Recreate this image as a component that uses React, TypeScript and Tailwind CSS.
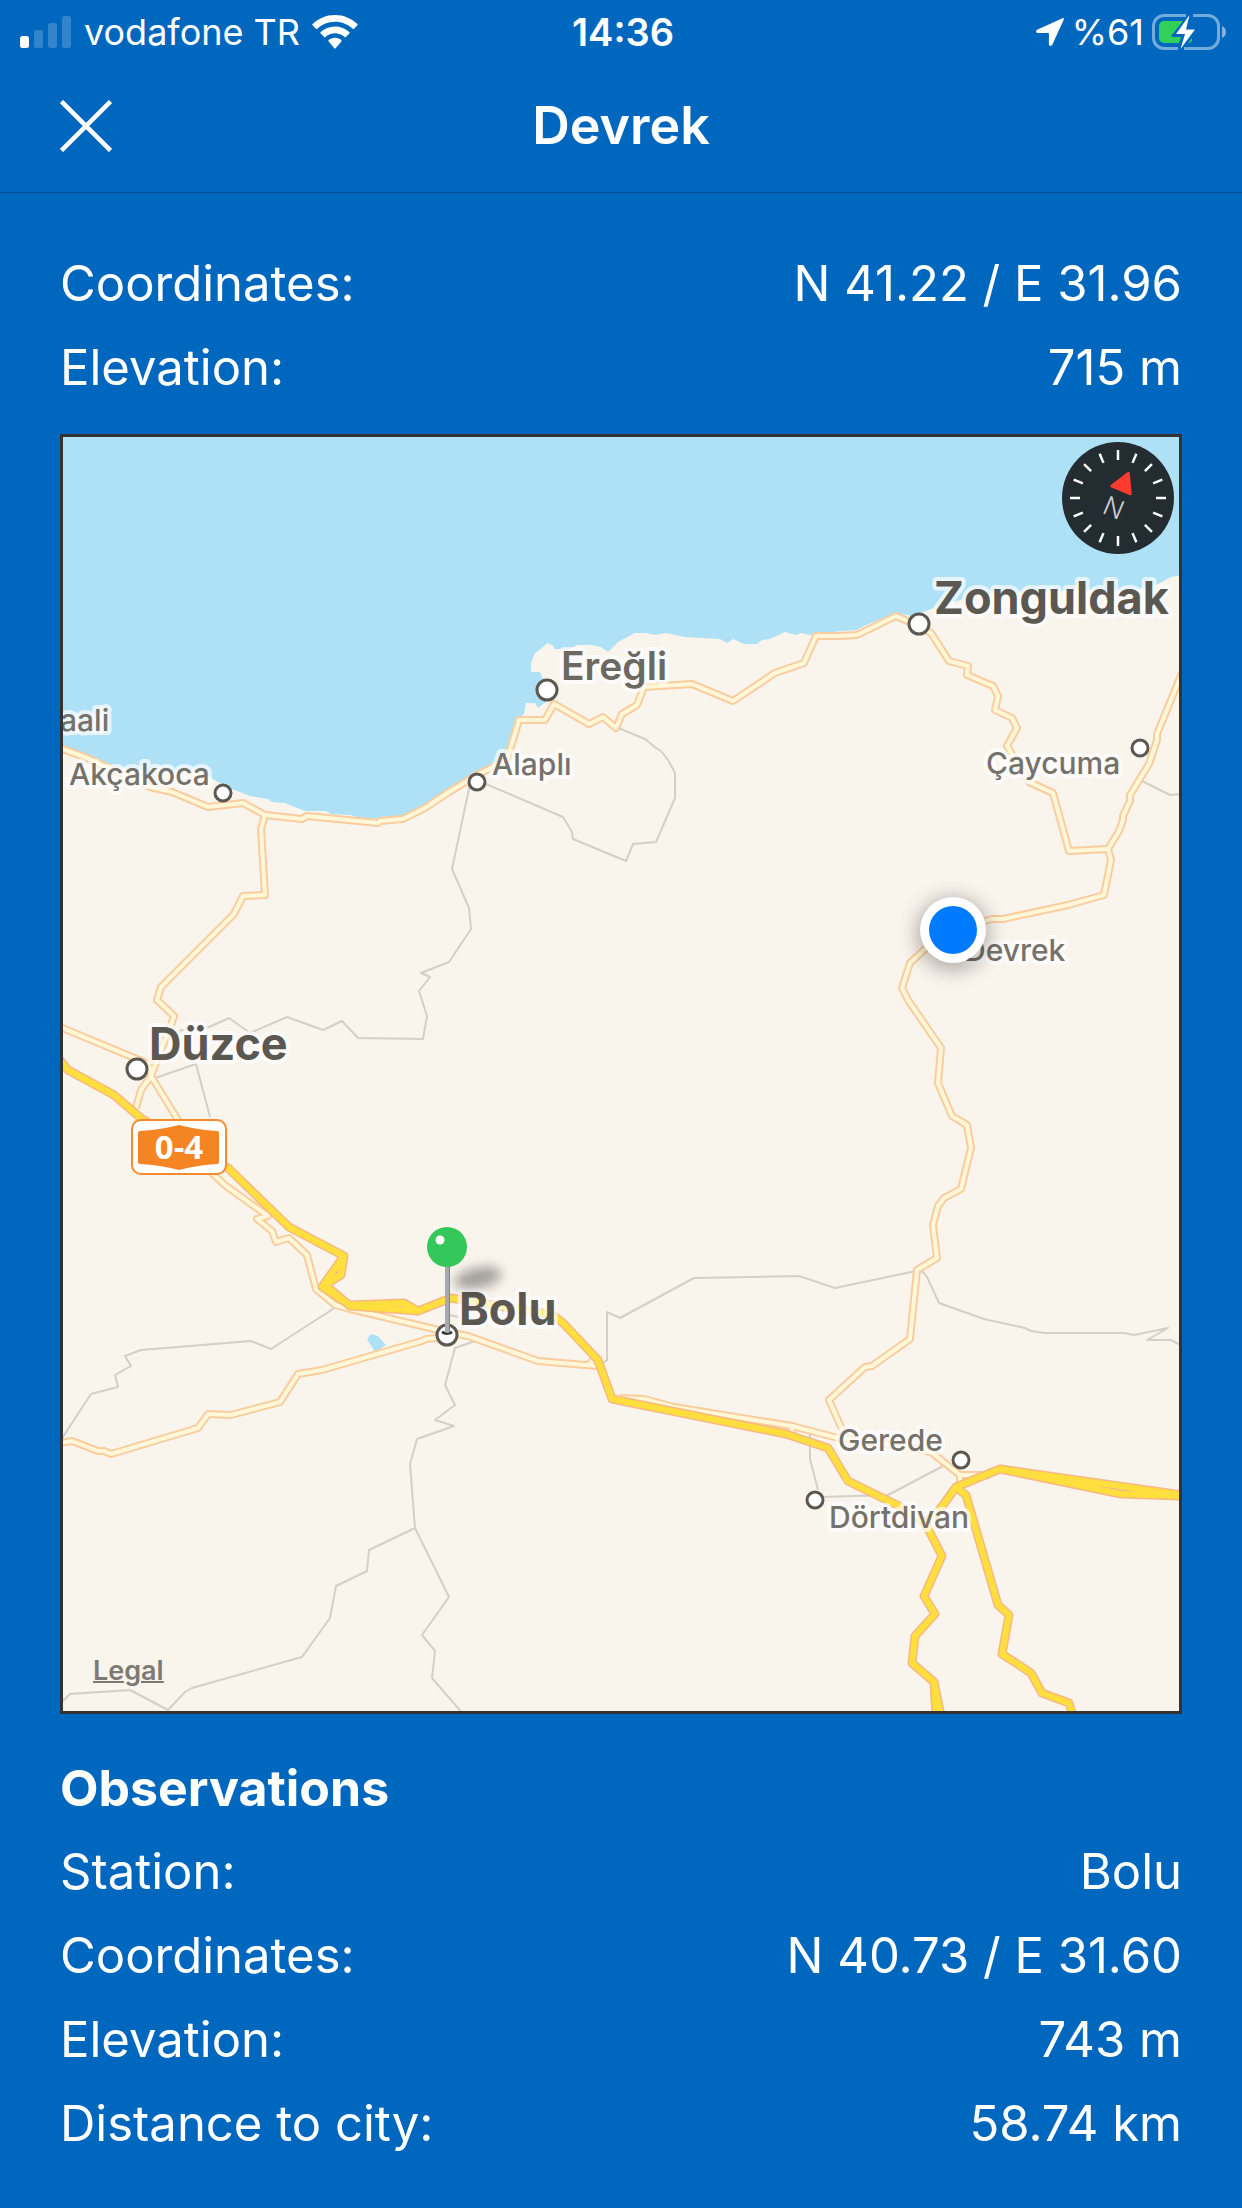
const FONT = "font-['Inter','Liberation_Sans',sans-serif]";

interface Place {
  name: string;
  x: number;
  y: number;
  size: "sm" | "md" | "lg";
}

interface InfoRowProps {
  label: string;
  value: string;
}

// Province and district borders
const BORDERS = [
  "470,784 452,869 469,908 471,929 449,962 421,973 430,977 419,991 427,1016 423,1039 358,1038 342,1021 323,1030 287,1017 250,1033 229,1018 209,1027 176,1031",
  "155,1078 196,1064 210,1117",
  "486,784 563,817 572,832 573,839 626,861 633,844 656,842 675,798 675,773 668,760 661,751 656,748 645,739 616,727",
  "1140,780 1170,795 1182,794",
  "336,1307 271,1349 251,1341 141,1350 125,1356 131,1366 115,1375 118,1387 91,1394 61,1440",
  "475,1341 455,1348 445,1385 455,1405 435,1420 454,1426 417,1439 410,1464 415,1528 449,1597 422,1635 435,1651 432,1678 464,1715",
  "415,1528 369,1550 367,1571 336,1586 330,1618 302,1657 192,1688 185,1692 168,1710 130,1690 70,1694 61,1703",
  "601,1365 607,1360 607,1312 620,1318 694,1278 799,1276 835,1288 916,1271 923,1272 927,1277 939,1303 984,1319 1025,1328 1031,1331 1044,1333 1125,1333 1134,1335 1168,1328 1147,1340 1171,1340 1182,1346",
  "810,1434 810,1459 818,1490",
  "823,1497 888,1495 947,1464",
  "449,1315 459,1317",
];

const ROADS = [
  "60,748 87,758 113,770 150,787 172,792 208,807 243,803 265,815 302,819 307,816 378,823 380,821 403,819 425,808 449,792 477,775 507,760 519,720 545,720 554,704 589,724 603,717 616,728 622,714 637,705 644,687 692,684 733,701 775,673 804,663 816,636 838,636 857,635 896,616 912,623 931,633 949,661 968,666 967,675 993,686 998,696 995,710 1012,718 1017,728 1007,746 1029,782 1053,793 1069,851 1108,849",
  "1182,673 1157,734 1157,740 1149,764 1130,795 1130,801 1123,816 1123,820 1119,831 1108,849 1111,860 1104,895 1068,905 1003,919 992,919 953,930 925,949 910,963 902,988 908,1000 941,1048 938,1083 952,1116 967,1125 971,1148 961,1189 944,1198 938,1206 933,1225 937,1258 917,1270 910,1339 872,1366 865,1367 829,1400 841,1427 846,1438",
  "265,815 261,829 265,895 243,896 234,914 161,987 157,1000 174,1016 170,1028 161,1050 151,1076 178,1120 213,1174 226,1186 268,1216 257,1219 272,1231 276,1242 289,1238 307,1255 316,1289 335,1305 350,1309 447,1332 468,1336 538,1361 597,1366",
  "60,1027 149,1064 151,1076 141,1090 136,1108",
  "588,1365 596,1358",
  "60,1443 72,1441 98,1451 104,1451 111,1454 198,1428 208,1414 231,1415 280,1402 298,1374 322,1370 422,1341 426,1339 447,1337",
  "620,1398 644,1399 674,1407 792,1426 838,1438 886,1444 931,1452 960,1475 990,1475",
  "960,1475 960,1487",
  "792,1426 792,1434",
];

const MOTORWAYS = [
  "60,1060 68,1070 114,1095 142,1119 228,1168 289,1227 344,1256 341,1275 322,1287 350,1305 404,1303 418,1311 451,1298 553,1315 564,1324 598,1360 612,1399 786,1434 828,1448 848,1481 901,1507 925,1523 942,1556 924,1596 935,1614 915,1636 912,1663 934,1682 936,1716",
  "344,1256 324,1284 350,1306 418,1311",
  "934,1682 941,1716",
  "925,1523 938,1512 956,1487 1000,1469 1182,1495",
  "1000,1469 1121,1494 1182,1496",
  "958,1489 966,1495 977,1533 998,1605 1009,1615 1002,1654 1031,1673 1042,1693 1069,1703 1073,1716",
];

const SEA =
  "60,434 1182,434 1182,575 1171,577 1156,585 1130,591 1082,590 1042,592 980,594 934,608 912,616 895,613 864,626 857,630 842,631 816,634 810,635 801,633 796,635 785,632 770,639 762,640 757,644 744,644 733,639 727,643 720,639 685,637 666,633 655,635 646,633 635,633 618,642 608,652 601,647 592,645 577,645 570,649 555,649 552,645 547,643 542,648 535,653 531,663 531,672 540,672 543,679 547,701 538,708 535,703 526,703 524,714 517,720 509,753 490,766 477,772 435,797 427,803 424,808 405,816 379,819 357,817 350,815 331,814 326,811 305,811 285,803 272,802 268,799 250,796 240,792 228,788 213,779 198,771 161,773 120,768 105,762 60,744";

const PLACES: Place[] = [
  { name: "aali", x: 60, y: 731, size: "sm" },
  { name: "Akçakoca", x: 69, y: 785, size: "sm" },
  { name: "Alaplı", x: 492, y: 775, size: "sm" },
  { name: "Ereğli", x: 561, y: 680, size: "md" },
  { name: "Zonguldak", x: 934, y: 614, size: "lg" },
  { name: "Çaycuma", x: 986, y: 774, size: "sm" },
  { name: "Devrek", x: 964, y: 961, size: "sm" },
  { name: "Düzce", x: 149, y: 1060, size: "lg" },
  { name: "Bolu", x: 459, y: 1325, size: "lg" },
  { name: "Gerede", x: 838, y: 1451, size: "sm" },
  { name: "Dörtdivan", x: 829, y: 1528, size: "sm" },
];

const TOWN_DOTS = [
  { x: 547, y: 690, r: 10 },
  { x: 919, y: 624, r: 10 },
  { x: 137, y: 1069, r: 10 },
  { x: 447, y: 1335, r: 10 },
  { x: 223, y: 793, r: 8 },
  { x: 477, y: 782, r: 8 },
  { x: 1140, y: 748, r: 8 },
  { x: 961, y: 1460, r: 8 },
  { x: 815, y: 1500, r: 8 },
];

const LABEL_STYLES = {
  sm: "fill-[#75726b] text-[30px] font-medium",
  md: "fill-[#6c6962] text-[39px] font-semibold",
  lg: "fill-[#5b5851] text-[45px] font-bold",
};

function Lines({ points, stroke, width }: { points: string[]; stroke: string; width: number }) {
  return (
    <g fill="none" stroke={stroke} strokeWidth={width} strokeLinejoin="round">
      {points.map((p) => (
        <polyline key={p} points={p} />
      ))}
    </g>
  );
}

function StatusBar() {
  return (
    <div className="grid h-16 grid-cols-[1fr_auto_1fr] items-center pr-4 pl-5 text-[36px] leading-[60px]">
      <div className="flex items-center gap-3">
        <svg width="52" height="32" viewBox="0 0 52 32" fill="#fff" aria-label="Signal">
          <rect x="0" y="20" width="9" height="12" rx="2.5" />
          <rect x="14" y="14" width="9" height="18" rx="2.5" opacity=".2" />
          <rect x="28" y="7" width="9" height="25" rx="2.5" opacity=".2" />
          <rect x="42" y="0" width="9" height="32" rx="2.5" opacity=".2" />
        </svg>
        <span>vodafone TR</span>
        <svg width="46" height="34" viewBox="0 0 46 34" fill="#fff" aria-label="Wi-Fi">
          <path d="M23 0C14.300 0 6.500 3.400.600 8.900a1 1 0 0 0 0 1.400l3.300 3.400a1 1 0 0 0 1.400 0A25.600 25.600 0 0 1 23 6.700c6.900 0 13.100 2.700 17.700 7a1 1 0 0 0 1.400 0l3.300-3.400a1 1 0 0 0 0-1.400C39.500 3.400 31.700 0 23 0z" />
          <path d="M23 11.400c-5.500 0-10.500 2.100-14.300 5.600a1 1 0 0 0 0 1.500l3.400 3.400a1 1 0 0 0 1.400 0 14 14 0 0 1 19 0 1 1 0 0 0 1.400 0l3.400-3.400a1 1 0 0 0 0-1.500A21 21 0 0 0 23 11.400z" />
          <path d="M23 22.800c-2.400 0-4.600.900-6.300 2.300a1 1 0 0 0 0 1.500l5.600 6.600a1 1 0 0 0 1.400 0l5.600-6.600a1 1 0 0 0 0-1.500c-1.700-1.400-3.900-2.300-6.300-2.300z" />
        </svg>
      </div>
      <span className="text-[38px] font-semibold">14:36</span>
      <div className="flex items-center justify-end gap-2">
        <svg width="28" height="28" viewBox="0 0 28 28" fill="#fff" aria-label="Location">
          <path d="M26.500.200 1.100 11.700C-.600 12.500-.100 15 1.700 15h10.600c.4 0 .6.200.6.600v10.600c0 1.900 2.600 2.300 3.400.600L27.800 1.600c.4-.9-.4-1.800-1.300-1.400z" />
        </svg>
        <span>%61</span>
        <svg width="74" height="36" viewBox="0 0 74 36" aria-label="Battery">
          <path
            d="M34 1.500H12A10.500 10.500 0 0 0 1.500 12v12A10.500 10.500 0 0 0 12 34.500h14M41 1.500h15A10.500 10.500 0 0 1 66.500 12v12A10.500 10.500 0 0 1 56 34.500H32"
            fill="none"
            stroke="#fff"
            strokeOpacity=".45"
            strokeWidth="3"
          />
          <path d="M70 12c2.500 1 4 3.300 4 6s-1.500 5-4 6z" fill="#fff" opacity=".5" />
          <path d="M31 7H12a5 5 0 0 0-5 5v12a5 5 0 0 0 5 5h15l2-6h-9l-1-1z" fill="#30d158" />
          <path d="m36 29 4-5v3q-1 2-4 2z" fill="#30d158" />
          <path d="M37.500 1 24 20h9L28.500 35 43 15.500h-9z" fill="#fff" />
        </svg>
      </div>
    </div>
  );
}

function InfoRow({ label, value }: InfoRowProps) {
  return (
    <div className="flex justify-between">
      <dt>{label}</dt>
      <dd>{value}</dd>
    </div>
  );
}

function Compass() {
  return (
    <svg viewBox="-56 -56 112 112" className="size-full">
      <circle r="56" fill="#232c31" />
      <g stroke="#fff" strokeWidth="2.500">
        {Array.from({ length: 16 }, (_, i) => (
          <line key={i} y1="-48" y2="-38" transform={`rotate(${i * 22.5})`} />
        ))}
      </g>
      <path
        d="M10.500-25-6.500-12 12.500-4z"
        fill="#ff3b30"
        stroke="#ff3b30"
        strokeWidth="2.500"
        strokeLinejoin="round"
      />
      <text
        y="20"
        textAnchor="middle"
        transform="rotate(23)"
        className="fill-[#c9cccd] text-[26px] font-light"
      >
        N
      </text>
    </svg>
  );
}

function StationMap() {
  return (
    <section aria-label="Map" className="relative overflow-hidden border-3 border-[#333]">
      <svg viewBox="63 437 1116 1274" className="block h-auto w-full bg-[#f9f4ec]">
        <defs>
          <filter id="soft" x="-50%" y="-150%" width="200%" height="400%">
            <feGaussianBlur stdDeviation="6" />
          </filter>
          <filter id="glow" x="-50%" y="-50%" width="200%" height="200%">
            <feGaussianBlur stdDeviation="10" />
          </filter>
        </defs>

        <polygon points={SEA} fill="#afe1f6" />
        <polygon points="367,1339 371,1334 378,1336 386,1345 375,1352" fill="#afe1f6" />

        <Lines points={BORDERS} stroke="#d2d0c8" width={2} />
        <Lines points={ROADS} stroke="#f9cd9f" width={8} />
        <Lines points={ROADS} stroke="#fff8d8" width={4} />
        <Lines points={MOTORWAYS} stroke="#f8b883" width={9} />
        <Lines points={MOTORWAYS} stroke="#ffdf3d" width={6} />

        {/* O-4 motorway shield */}
        <rect x="132" y="1120" width="94" height="54" rx="9" fill="#fff" stroke="#f58a2f" strokeWidth="2" />
        <path d="M140 1131q20-1 39-6 19 5 38 6 2 0 2 2v29q0 2-2 2-19 1-38 6-19-5-39-6-2 0-2-2v-29q0-2 2-2z" fill="#f58423" />
        <text
          x="179"
          y="1159"
          textAnchor="middle"
          className="fill-white font-['Open_Sans','Noto_Sans',sans-serif] text-[33px] font-bold"
        >
          0-4
        </text>

        {TOWN_DOTS.map(({ x, y, r }) => (
          <circle key={`${x}-${y}`} cx={x} cy={y} r={r} fill="#fff" stroke="#5b5851" strokeWidth="3" />
        ))}

        {PLACES.map(({ name, x, y, size }) => (
          <text
            key={name}
            x={x}
            y={y}
            stroke="#fff"
            strokeOpacity=".7"
            strokeWidth="8"
            strokeLinejoin="round"
            paintOrder="stroke"
            className={LABEL_STYLES[size]}
          >
            {name}
          </text>
        ))}

        {/* Station pin */}
        <ellipse
          cx="478"
          cy="1278"
          rx="24"
          ry="10"
          fill="#000"
          opacity=".35"
          filter="url(#soft)"
          transform="rotate(-12 478 1278)"
        />
        <path d="M442 1332q5 3 10 0" fill="none" stroke="#333" strokeWidth="3" />
        <rect x="445" y="1264" width="5" height="69" rx="2" fill="#a8abae" />
        <rect x="449" y="1264" width="1" height="67" fill="#7f8386" />
        <circle cx="447" cy="1247" r="20" fill="#34c759" />
        <circle cx="440" cy="1240" r="4.500" fill="#fff" />

        {/* City location */}
        <circle cx="953" cy="934" r="36" fill="#000" opacity=".3" filter="url(#glow)" />
        <circle cx="953" cy="930" r="33" fill="#fff" />
        <circle cx="953" cy="930" r="24" fill="#007aff" />
      </svg>

      <button type="button" aria-label="Compass" className="absolute top-[5px] right-[5px] size-28">
        <Compass />
      </button>
      <a
        href="#legal"
        className="absolute bottom-6 left-[30px] text-[27px] leading-8 font-semibold text-[#7d7a75] underline decoration-2"
      >
        Legal
      </a>
    </section>
  );
}

export default function App() {
  return (
    <div className={`min-h-screen bg-[#0067bf] text-white ${FONT}`}>
      <StatusBar />
      <header className="grid h-[129px] grid-cols-[1fr_auto_1fr] items-center border-b border-[#004f93] px-[60px] pb-1">
        <button type="button" aria-label="Close" className="size-[52px]">
          <svg viewBox="0 0 52 52" stroke="#fff" strokeWidth="4.500" className="size-full">
            <path d="M1.500 1.500l49 49M50.500 1.500l-49 49" />
          </svg>
        </button>
        <h1 className="text-[52px] leading-[64px] font-semibold">Devrek</h1>
      </header>

      <main className="px-[60px] pt-[49px] pb-10 text-[49px] leading-[84px]">
        <dl className="mb-6">
          <InfoRow label="Coordinates:" value="N 41.22 / E 31.96" />
          <InfoRow label="Elevation:" value="715 m" />
        </dl>

        <StationMap />

        <h2 className="mt-8 text-[50px] leading-[84px] font-bold">Observations</h2>
        <dl>
          <InfoRow label="Station:" value="Bolu" />
          <InfoRow label="Coordinates:" value="N 40.73 / E 31.60" />
          <InfoRow label="Elevation:" value="743 m" />
          <InfoRow label="Distance to city:" value="58.74 km" />
        </dl>
      </main>
    </div>
  );
}
